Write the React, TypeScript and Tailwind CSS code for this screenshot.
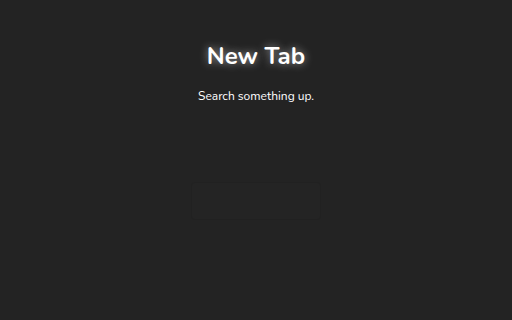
export default function App() {
  return (
    <div className="min-h-screen w-full bg-[#232323] text-white flex flex-col items-center font-['Nunito','Lato','Open_Sans',sans-serif]">
      <h1 className="mt-[41px] text-[24px] leading-[30px] font-bold [text-shadow:0_0_8px_rgba(255,255,255,0.55)]">
        New Tab
      </h1>
      <p className="mt-[16px] text-[12px] leading-[18px] text-white">Search something up.</p>
      <div className="mt-[77px] w-[130px] h-[38px] rounded-sm bg-[#242424] border border-[#212121]" />
    </div>
  );
}
